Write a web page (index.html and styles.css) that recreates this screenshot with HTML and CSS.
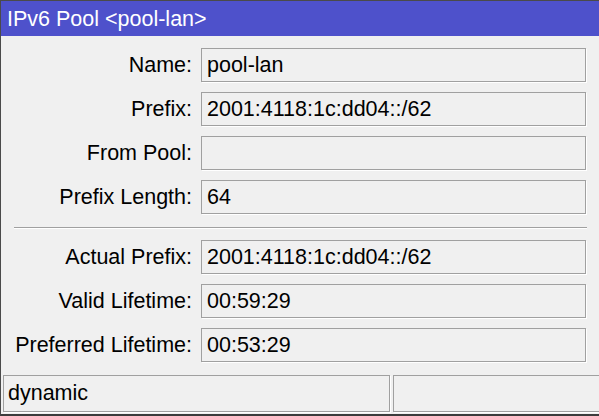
FILE: index.html
```html
<!DOCTYPE html>
<html>
<head>
<meta charset="utf-8">
<link rel="stylesheet" href="styles.css">
</head>
<body>
<div class="window">
  <div class="titlebar">IPv6 Pool &lt;pool-lan&gt;</div>
  <div class="form">
    <div class="row"><div class="label">Name:</div><div class="field">pool-lan</div></div>
    <div class="row"><div class="label">Prefix:</div><div class="field">2001:4118:1c:dd04::/62</div></div>
    <div class="row"><div class="label">From Pool:</div><div class="field"></div></div>
    <div class="row"><div class="label">Prefix Length:</div><div class="field">64</div></div>
    <div class="separator"></div>
    <div class="row"><div class="label">Actual Prefix:</div><div class="field">2001:4118:1c:dd04::/62</div></div>
    <div class="row"><div class="label">Valid Lifetime:</div><div class="field">00:59:29</div></div>
    <div class="row"><div class="label">Preferred Lifetime:</div><div class="field">00:53:29</div></div>
  </div>
  <div class="statusbar">
    <div class="panel panel-main">dynamic</div>
    <div class="panel panel-side"></div>
  </div>
</div>
</body>
</html>
```
FILE: styles.css
```css
html, body {
  margin: 0;
  padding: 0;
  background: #f0f0f0;
}
body {
  width: 599px;
  height: 416px;
  overflow: hidden;
  font-family: "Liberation Sans", Arial, sans-serif;
  font-size: 21.5px;
  color: #000;
}
.window {
  box-sizing: border-box;
  width: 599px;
  height: 416px;
  border-top: 1px solid #4a4a4a;
  border-left: 1px solid #4a4a4a;
  border-bottom: 2px solid #3c3c3c;
  background: #f0f0f0;
  display: flex;
  flex-direction: column;
}
.titlebar {
  height: 35px;
  line-height: 36px;
  background: #4e51cb;
  color: #fff;
  padding-left: 6px;
  white-space: nowrap;
}
.form {
  display: flex;
  flex-direction: column;
  padding-top: 12px;
}
.row {
  display: grid;
  grid-template-columns: 191px 385px;
  column-gap: 9px;
  height: 34px;
  margin-bottom: 10px;
  align-items: center;
}
.row:last-child {
  margin-bottom: 0;
}
.label {
  text-align: right;
  white-space: nowrap;
}
.field {
  box-sizing: border-box;
  height: 34px;
  line-height: 32px;
  border: 1px solid #a0a0a0;
  box-shadow: 1px 1px 0 #ffffff;
  padding-left: 5px;
  white-space: nowrap;
}
.separator {
  height: 1px;
  margin: 3px 0 11px 13px;
  width: 573px;
  background: #a0a0a0;
  border-bottom: 1px solid #ffffff;
}
.form .row:nth-child(4) {
  margin-bottom: 10px;
}
.statusbar {
  margin-top: 13px;
  display: flex;
  padding-left: 2px;
  gap: 3px;
  height: 37px;
}
.panel {
  box-sizing: border-box;
  height: 37px;
  border: 1px solid #a0a0a0;
  box-shadow: 1px 1px 0 #ffffff;
  line-height: 35px;
  padding-left: 4px;
  white-space: nowrap;
}
.panel-main {
  width: 387px;
}
.panel-side {
  flex: 1;
  margin-right: -2px;
}
```
